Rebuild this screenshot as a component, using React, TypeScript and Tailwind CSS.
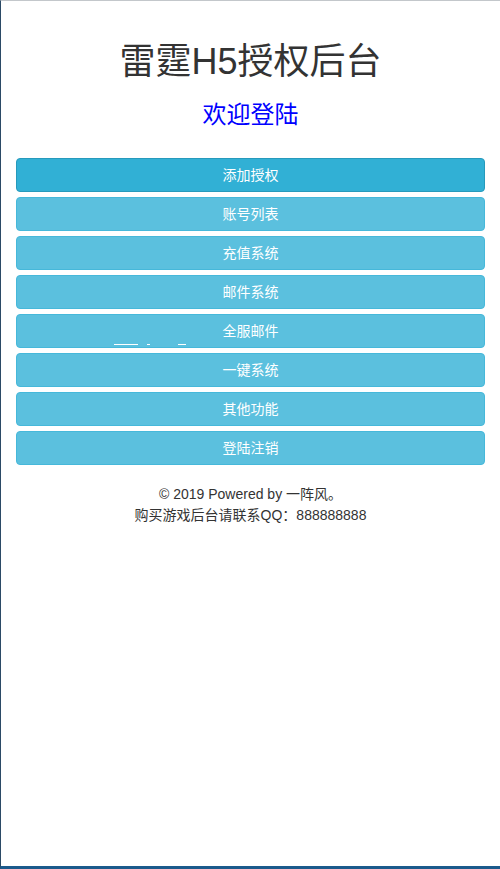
const items = [
  "添加授权",
  "账号列表",
  "充值系统",
  "邮件系统",
  "全服邮件",
  "一键系统",
  "其他功能",
  "登陆注销",
];

export default function App() {
  return (
    <div
      className="flex h-[869px] w-[500px] flex-col border-l border-t border-b-[3px] border-l-[#2b4a66] border-t-[#c3c7cb] border-b-[#1b5a8c] bg-white text-[14px] text-[#333]"
      style={{ fontFamily: '"Liberation Sans", "Noto Sans CJK SC", sans-serif' }}
    >
      <div className="px-[15px]">
        <h1 className="mt-[41px] text-center text-[36px] leading-[40px] font-normal">
          雷霆H5授权后台
        </h1>
        <h3 className="mt-[20px] text-center text-[24px] leading-[26px] text-[#0000ff]">
          欢迎登陆
        </h3>

        <div className="mt-[30px] flex flex-col gap-[5px]">
          {items.map((t, i) => (
            <button
              key={t}
              className={`relative h-[34px] w-full rounded-[4px] border text-center text-[14px] leading-[20px] text-white ${
                i === 0
                  ? "border-[#269abc] bg-[#31b0d5]"
                  : "border-[#46b8da] bg-[#5bc0de]"
              }`}
            >
              {t}
              {i === 4 && (
                <span className="absolute left-[97px] top-[29px] flex h-[2px] items-start">
                  <span className="h-[1px] w-[24px] bg-white" />
                  <span className="ml-[9px] h-[1px] w-[3px] bg-white" />
                  <span className="ml-[28px] h-[1px] w-[8px] bg-white" />
                </span>
              )}
            </button>
          ))}
        </div>

        <div className="mt-[19px] text-center leading-[21px]">
          <p>© 2019 Powered by 一阵风。</p>
          <p>购买游戏后台请联系QQ：888888888</p>
        </div>
      </div>
    </div>
  );
}
